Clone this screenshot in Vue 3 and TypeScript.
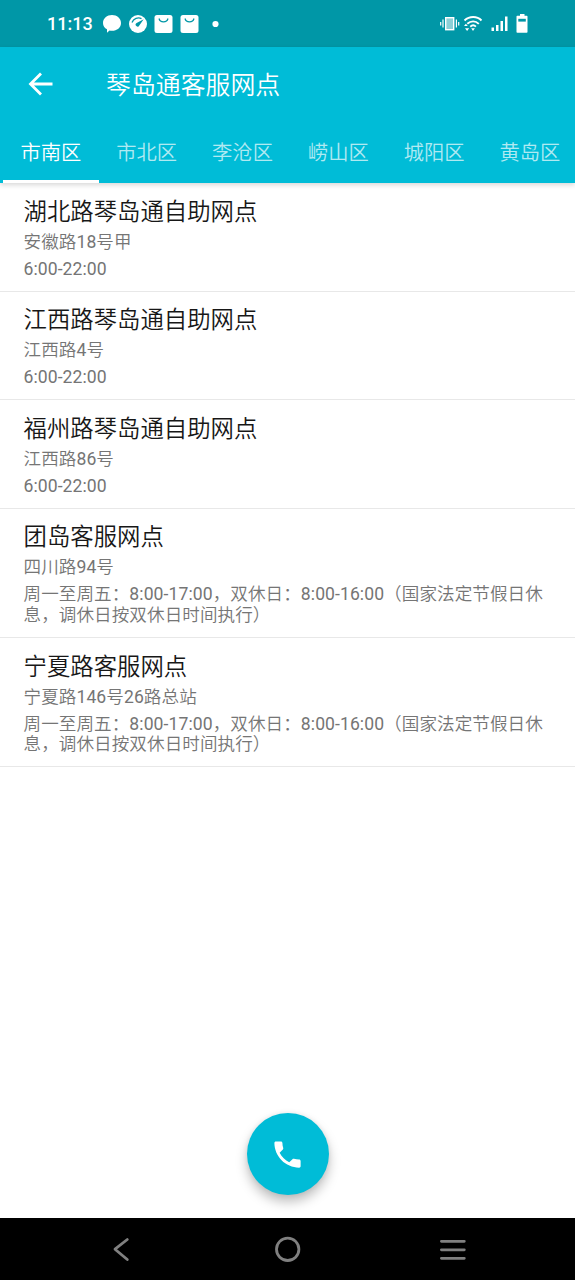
<script setup lang="ts">
import { ref } from 'vue'

interface Branch {
  name: string
  address: string
  hours: string
}

interface Run {
  text: string
  latin: boolean
}

const districts: string[] = ['市南区', '市北区', '李沧区', '崂山区', '城阳区', '黄岛区']
const active = ref(0)

const longHours = '周一至周五：8:00-17:00，双休日：8:00-16:00（国家法定节假日休息，调休日按双休日时间执行）'
const branches: Branch[] = [
  { name: '湖北路琴岛通自助网点', address: '安徽路18号甲', hours: '6:00-22:00' },
  { name: '江西路琴岛通自助网点', address: '江西路4号', hours: '6:00-22:00' },
  { name: '福州路琴岛通自助网点', address: '江西路86号', hours: '6:00-22:00' },
  { name: '团岛客服网点', address: '四川路94号', hours: longHours },
  { name: '宁夏路客服网点', address: '宁夏路146号26路总站', hours: longHours },
]

// Digits carry a slightly heavier weight than the Chinese text around them.
function runs(text: string): Run[] {
  return (text.match(/[\d:-]+|[^\d:-]+/g) ?? []).map((part) => ({
    text: part,
    latin: /^\d/.test(part),
  }))
}
</script>

<template>
  <div class="screen">
    <div class="status">
      <span class="clock">11:13</span>
      <svg class="notices" width="120" height="20" viewBox="0 0 120 20">
        <path d="M9 1c5 0 9 3.400 9 7.900s-4 7.900-9 7.900c-.9 0-1.700-.1-2.500-.3L4 18.800v-3.500C1.500 14 0 11.700 0 8.900 0 4.400 4 1 9 1z" fill="#fff" />
        <circle cx="35" cy="10" r="9" fill="#fff" />
        <path d="M29 8.500C30.500 4.500 35 3 38.500 4.600" fill="none" stroke="#0097a7" stroke-width="1.300" />
        <path d="M40.700 5.300L36.300 11.600a1.900 1.900 0 1 1-2.700-2.500z" fill="#0097a7" />
        <rect x="51.500" y="1" width="18" height="18" rx="2.500" fill="#fff" />
        <path d="M56 4.500a4.600 4.200 0 0 0 9 0" fill="none" stroke="#0097a7" stroke-width="1.200" />
        <rect x="77.500" y="1" width="18" height="18" rx="2.500" fill="#fff" />
        <path d="M82 4.500a4.600 4.200 0 0 0 9 0" fill="none" stroke="#0097a7" stroke-width="1.200" />
        <circle cx="112.500" cy="10" r="3.100" fill="#fff" />
      </svg>
      <svg class="signals" width="90" height="20" viewBox="0 0 90 20">
        <rect x="6.700" y="3.700" width="8" height="12" fill="#fff" fill-opacity=".55" stroke="#fff" stroke-width="1.400" />
        <path d="M4 5.500v8M1.700 8v3.500M17.400 5.500v8M19.700 8v3.500" stroke="#fff" stroke-width="1.200" />
        <g fill="none" stroke="#fff" stroke-width="1.900">
          <path d="M25.500 6.500c5-4.600 12.500-4.600 17 0" />
          <path d="M28.300 9.800c3.500-3.300 8.200-3.300 11.500 0" />
          <path d="M31.300 12.700c1.700-1.600 4-1.600 5.600 0" />
        </g>
        <path d="M32.200 14.200h3.700L34 16.900zM25 12l1.900-2.300L28.800 12zM26 14.200h4.200L28.100 17z" fill="#fff" />
        <path d="M52.500 13.500h2.500V17h-2.500zM57 11h2.500v6H57zM61.500 7H64v10h-2.500zM66 2.500h2.500V17H66z" fill="#fff" />
        <path d="M81 0h4.500v1.800h2.300q.7 0 .7.700v15.500q0 .8-.8.800h-9.400q-.8 0-.8-.8V2.500q0-.7.7-.7H81z" fill="#fff" />
        <path d="M79.300 4.800h7.500v2.800h-7.500z" fill="#0097a7" />
      </svg>
    </div>

    <header class="appbar">
      <div class="toolbar">
        <svg class="back" width="26" height="24" viewBox="0 0 26 24">
          <path d="M24.500 12H3M13 1.500L2.500 12 13 22.500" fill="none" stroke="#fff" stroke-width="2.800" />
        </svg>
        <h1>琴岛通客服网点</h1>
      </div>
      <nav class="tabs">
        <div
          v-for="(district, i) in districts"
          :key="district"
          class="tab"
          :class="{ active: i === active }"
          @click="active = i"
        >{{ district }}</div>
      </nav>
    </header>

    <main class="list">
      <article v-for="branch in branches" :key="branch.name" class="row">
        <h2>{{ branch.name }}</h2>
        <p class="address"><span v-for="(run, i) in runs(branch.address)" :key="i" :class="{ latin: run.latin }">{{ run.text }}</span></p>
        <p class="hours"><span v-for="(run, i) in runs(branch.hours)" :key="i" :class="{ latin: run.latin }">{{ run.text }}</span></p>
      </article>
    </main>

    <div class="action">
      <button class="call" aria-label="拨打电话">
        <svg width="35" height="35" viewBox="0 0 24 24">
          <path d="M6.620 10.790c1.440 2.830 3.760 5.140 6.590 6.590l2.200-2.200c.27-.27.67-.36 1.020-.24 1.120.37 2.330.57 3.570.57.55 0 1 .45 1 1V20c0 .55-.45 1-1 1-9.390 0-17-7.610-17-17 0-.55.45-1 1-1h3.500c.55 0 1 .45 1 1 0 1.250.2 2.450.57 3.570.11.35.03.74-.25 1.020l-2.200 2.200z" fill="#fff" />
        </svg>
      </button>
    </div>

    <footer class="navbar">
      <svg width="575" height="62" viewBox="0 0 575 62" fill="none" stroke="#808080" stroke-width="2.800" stroke-linecap="round" stroke-linejoin="round">
        <path d="M127.300 21.500L115 31.200l12.300 10.300" />
        <circle cx="287.700" cy="31.300" r="11.200" />
        <path d="M441.400 23.300h22.900M441.400 31.800h22.900M441.400 40.300h22.900" />
      </svg>
    </footer>
  </div>
</template>

<style>
body {
  margin: 0;
  background: #fff;
}
</style>

<style scoped>
.screen {
  width: 575px;
  height: 1280px;
  display: flex;
  flex-direction: column;
  overflow: hidden;
  background: #fff;
  font-family: Roboto, "Noto Sans CJK SC", sans-serif;
}

.status {
  height: 47px;
  flex: none;
  box-sizing: border-box;
  padding: 0 46px 0 47px;
  display: flex;
  align-items: center;
  background: #0097a7;
  color: #fff;
}

.clock {
  width: 55.5px;
  font-size: 18px;
  font-weight: 500;
  line-height: 20px;
}

.signals {
  margin-left: auto;
}

.appbar {
  height: 136px;
  flex: none;
  position: relative;
  z-index: 1;
  background: #00bcd7;
  box-shadow: 0 2px 5px rgba(0, 0, 0, 0.16);
  color: #fff;
}

.toolbar {
  height: 74px;
  display: flex;
  align-items: center;
  padding-left: 28px;
}

h1 {
  margin: 0 0 0 52px;
  padding-top: 3px;
  font-size: 24.9px;
  font-weight: 350;
  line-height: 34px;
}

.tabs {
  height: 62px;
  display: flex;
  padding-left: 3px;
}

.tab {
  width: 95.8px;
  flex: none;
  box-sizing: border-box;
  padding-top: 17px;
  border-bottom: 3px solid transparent;
  text-align: center;
  font-size: 20.3px;
  font-weight: 350;
  line-height: 30px;
  color: rgba(255, 255, 255, 0.7);
}

.tab.active {
  color: #fff;
  border-bottom-color: #fff;
}

.list {
  flex: 1;
}

.row {
  box-sizing: border-box;
  padding: 12.800px 24px 11.050px 23.500px;
  border-bottom: 1px solid #e8e8e8;
}

h2,
p {
  margin: 0;
}

h2 {
  font-size: 23.4px;
  font-weight: 350;
  line-height: 32px;
  color: #171717;
}

p {
  font-size: 17.57px;
  font-weight: 350;
  line-height: 20.7px;
  letter-spacing: 0.08px;
  color: #757575;
}

.latin {
  font-weight: 400;
}

.address {
  margin-top: 4px;
}

.hours {
  margin-top: 6.3px;
}

.action {
  height: 105px;
  flex: none;
  display: flex;
  justify-content: center;
  align-items: flex-start;
}

.call {
  width: 82px;
  height: 82px;
  padding: 0;
  border: 0;
  border-radius: 50%;
  display: flex;
  align-items: center;
  justify-content: center;
  background: #00bcd7;
  box-shadow: 0 7px 12px rgba(0, 0, 0, 0.25), 0 0 5px rgba(0, 0, 0, 0.08);
}

.navbar {
  height: 62px;
  flex: none;
  background: #000;
}

.navbar svg {
  display: block;
}
</style>
